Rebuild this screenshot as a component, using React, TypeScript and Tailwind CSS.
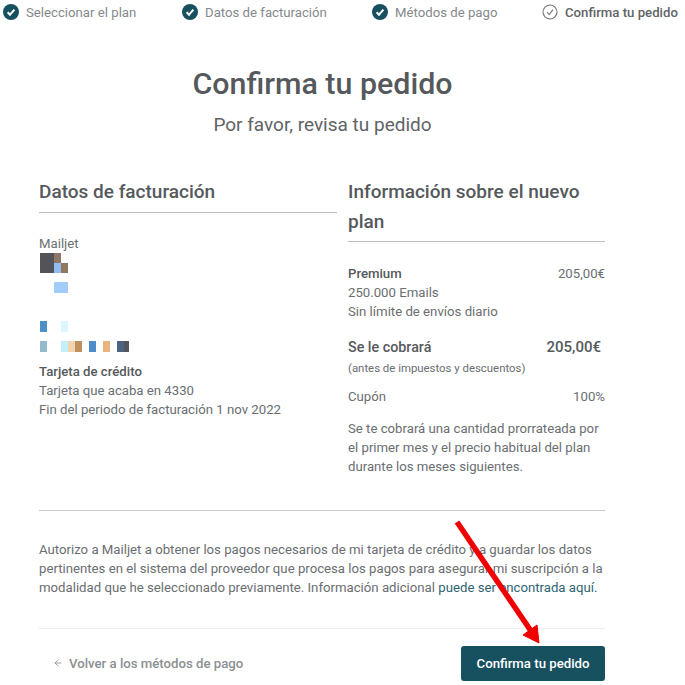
import { ArrowLeft } from "lucide-react";

const CheckFilled = () => (
  <svg width="16" height="16" viewBox="0 0 16 16" className="shrink-0">
    <circle cx="8" cy="8" r="8" fill="#17505f" />
    <path d="M4.6 8.3 7 10.7l4.4-5" fill="none" stroke="#fff" strokeWidth="2" />
  </svg>
);

const CheckOutline = () => (
  <svg width="16" height="16" viewBox="0 0 16 16" className="shrink-0">
    <circle cx="8" cy="8" r="7" fill="none" stroke="#777" strokeWidth="1.1" />
    <path d="M5 8.2 7.2 10.6 11 5.6" fill="none" stroke="#777" strokeWidth="1.1" />
  </svg>
);

const Step = ({ label, width, active }: { label: string; width: string; active?: boolean }) => (
  <div className={`flex items-center gap-[7px] whitespace-nowrap ${width}`}>
    {active ? <CheckOutline /> : <CheckFilled />}
    <span className={active ? "font-medium text-[#5f6367]" : "text-[#85898c]"}>{label}</span>
  </div>
);

const blocks: [number, number, number, number, string][] = [
  [0, 0, 14, 20, "#55535a"],
  [14, 0, 7, 10, "#8f7768"],
  [14, 10, 7, 10, "#8fbdf0"],
  [21, 10, 7, 10, "#94775f"],
  [14, 29, 14, 11, "#a2cdfa"],
  [0, 68, 7, 11, "#4d90c8"],
  [21, 68, 7, 11, "#dcf6fd"],
  [0, 88, 7, 11, "#95b9cc"],
  [21, 88, 7, 11, "#c4eef8"],
  [28, 88, 7, 11, "#f2d5b0"],
  [35, 88, 7, 11, "#c09160"],
  [49, 88, 7, 11, "#4d8cc8"],
  [63, 88, 7, 11, "#e6b47c"],
  [77, 88, 7, 11, "#4d6480"],
  [84, 88, 7, 11, "#55565c"],
];

export default function App() {
  return (
    <div className="relative h-[685px] w-[685px] overflow-hidden bg-white font-['Roboto',sans-serif] text-[13.2px] text-[#6a6e71]">
      <div className="flex h-[25px] items-center pl-[3px]">
        <Step label="Seleccionar el plan" width="w-[179px]" />
        <Step label="Datos de facturación" width="w-[190px]" />
        <Step label="Métodos de pago" width="w-[170px]" />
        <Step label="Confirma tu pedido" width="w-[140px]" active />
      </div>

      <div className="w-[645px] text-center">
        <h1 className="mt-[41px] text-[30.4px] leading-[36px] font-medium text-[#55595c]">Confirma tu pedido</h1>
        <p className="mt-[11px] text-[19px] leading-[24px] text-[#5f6367]">Por favor, revisa tu pedido</p>
      </div>

      <div className="mt-[40px] ml-[39px] w-[566px]">
        <div className="flex h-[334px] gap-[11px] border-b border-[#c9cbcd]">
          <div className="w-[298px]">
            <h2 className="h-[36px] border-b border-[#bcbfc1] text-[19px] leading-[30px] font-medium text-[#55595c]">
              Datos de facturación
            </h2>
            <p className="mt-[22px] leading-[18px]">Mailjet</p>
            <svg width="90" height="100" className="block">
              {blocks.map(([x, y, w, h, fill]) => (
                <rect key={`${x}-${y}`} x={x + 1} y={y} width={w} height={h} fill={fill} />
              ))}
            </svg>
            <p className="mt-[10px] leading-[18px] font-medium text-[#55595c]">Tarjeta de crédito</p>
            <p className="leading-[19px]">Tarjeta que acaba en 4330</p>
            <p className="leading-[19px]">Fin del periodo de facturación 1 nov 2022</p>
          </div>

          <div className="w-[257px]">
            <h2 className="border-b border-[#bcbfc1] pb-[4px] text-[19px] leading-[30px] font-medium text-[#55595c]">
              Información sobre el nuevo plan
            </h2>
            <div className="mt-[23px] flex justify-between leading-[18px]">
              <span className="font-medium text-[#55595c]">Premium</span>
              <span>205,00€</span>
            </div>
            <p className="leading-[19px]">250.000 Emails</p>
            <p className="leading-[19px]">Sin límite de envíos diario</p>
            <div className="mt-[16px] flex items-center justify-between pr-[4px] leading-[20px] font-medium text-[#55595c]">
              <span className="text-[14.3px]">Se le cobrará</span>
              <span className="text-[15px]">205,00€</span>
            </div>
            <p className="mt-[2px] text-[11.4px] leading-[18px]">(antes de impuestos y descuentos)</p>
            <div className="mt-[10px] flex justify-between leading-[19px]">
              <span>Cupón</span>
              <span>100%</span>
            </div>
            <p className="mt-[13px] leading-[19px]">
              Se te cobrará una cantidad prorrateada por el primer mes y el precio habitual del plan durante los meses siguientes.
            </p>
          </div>
        </div>

        <p className="mt-[29px] leading-[19px] text-[#6a6e71]">
          Autorizo a Mailjet a obtener los pagos necesarios de mi tarjeta de crédito y a guardar los datos pertinentes en el sistema del proveedor que procesa los pagos para asegurar mi suscripción a la modalidad que he seleccionado previamente. Información adicional{" "}
          <span className="text-[#2f6473]">puede ser encontrada aquí.</span>
        </p>

        <div className="mt-[31px] flex items-center justify-between border-t border-[#eceded] pt-[17px]">
          <div className="ml-[14px] flex items-center gap-[6px] font-medium text-[#8b8f92]">
            <ArrowLeft size={10} />
            <span>Volver a los métodos de pago</span>
          </div>
          <button className="h-[35px] w-[144px] rounded-[3px] bg-[#17505f] text-[13.2px] font-medium text-white">
            Confirma tu pedido
          </button>
        </div>
      </div>

      <svg width="110" height="135" viewBox="0 0 110 135" className="absolute top-[517px] left-[448px]">
        <path d="M9 5 83 114" stroke="#f00000" strokeWidth="5.5" fill="none" />
        <path d="M91 126 75 118 89 108Z" fill="#f00000" stroke="#f00000" strokeWidth="1" />
      </svg>
    </div>
  );
}
